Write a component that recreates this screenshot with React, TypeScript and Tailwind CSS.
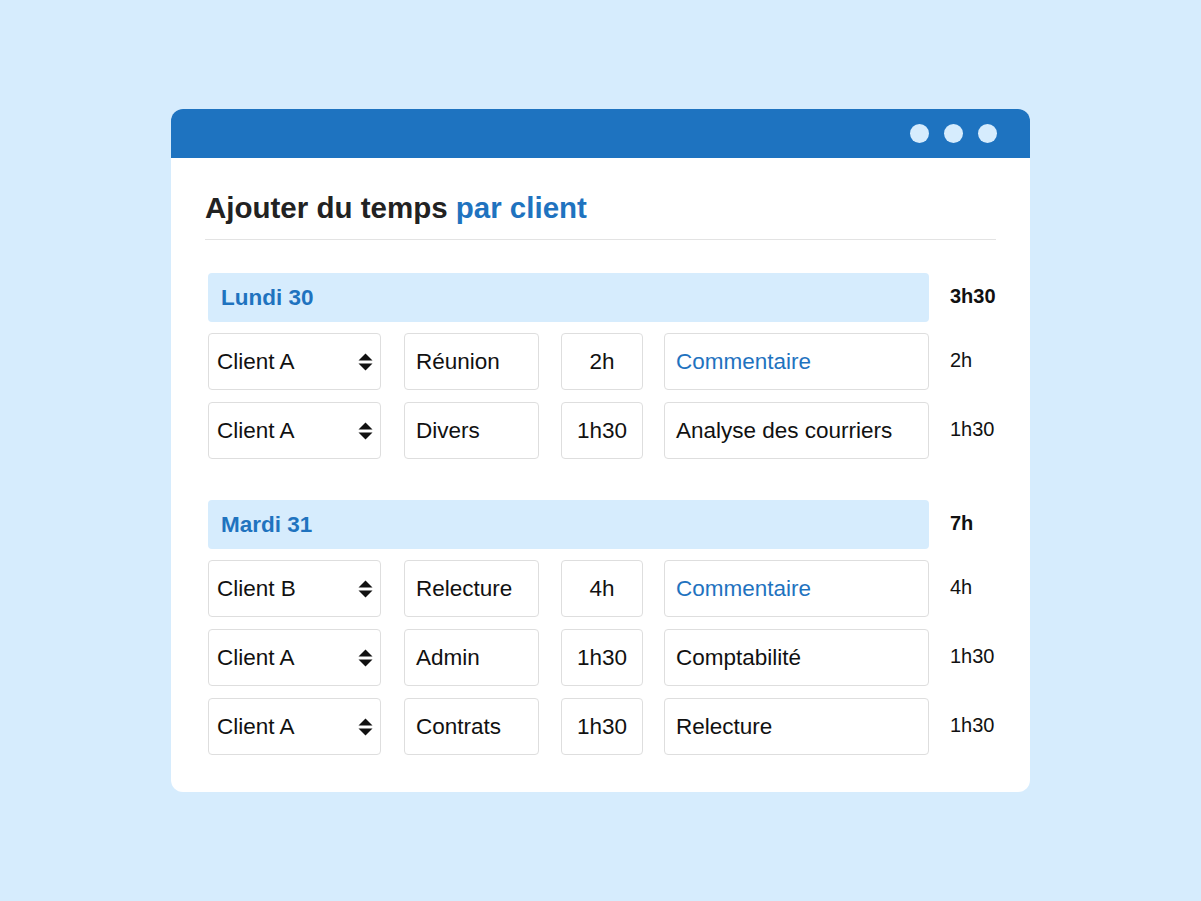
import React from 'react';

type Entry = {
  client: string;
  activity: string;
  duration: string;
  comment: string;
  placeholder?: boolean;
};

type Day = {
  label: string;
  total: string;
  entries: Entry[];
};

const DAYS: Day[] = [
  {
    label: 'Lundi 30',
    total: '3h30',
    entries: [
      { client: 'Client A', activity: 'Réunion', duration: '2h', comment: 'Commentaire', placeholder: true },
      { client: 'Client A', activity: 'Divers', duration: '1h30', comment: 'Analyse des courriers' },
    ],
  },
  {
    label: 'Mardi 31',
    total: '7h',
    entries: [
      { client: 'Client B', activity: 'Relecture', duration: '4h', comment: 'Commentaire', placeholder: true },
      { client: 'Client A', activity: 'Admin', duration: '1h30', comment: 'Comptabilité' },
      { client: 'Client A', activity: 'Contrats', duration: '1h30', comment: 'Relecture' },
    ],
  },
];

const SortArrows: React.FC = () => (
  <svg width="15" height="20" viewBox="0 0 15 20" className="shrink-0">
    <path d="M7.5 1.5 L14.5 8.5 H0.5 Z" fill="#111" />
    <path d="M7.5 18.5 L14.5 11.5 H0.5 Z" fill="#111" />
  </svg>
);

const box = 'h-[57px] bg-white border border-[#dedede] rounded-[4px] flex items-center';

const EntryRow: React.FC<{ entry: Entry }> = ({ entry }) => (
  <div className="flex items-center">
    <div className={`${box} w-[173px] pl-[8px] pr-[7px] justify-between`}>
      <span>{entry.client}</span>
      <SortArrows />
    </div>
    <div className={`${box} w-[135px] ml-[23px] pl-[11px]`}>{entry.activity}</div>
    <div className={`${box} w-[82px] ml-[22px] justify-center`}>{entry.duration}</div>
    <div
      className={`${box} w-[265px] ml-[21px] pl-[11px] ${entry.placeholder ? 'text-[#1f73bf]' : ''}`}
    >
      {entry.comment}
    </div>
    <div className="ml-[21px] pb-[4px] text-[20px] text-[#111]">{entry.duration}</div>
  </div>
);

const DaySection: React.FC<{ day: Day }> = ({ day }) => (
  <div className="flex flex-col gap-[12px]">
    <div className="flex items-center">
      <div className="w-[721px] h-[49px] bg-[#d6ecfd] rounded-[4px] flex items-center pl-[13px] text-[22.5px] font-bold text-[#1f73bf]">
        {day.label}
      </div>
      <div className="ml-[21px] pb-[3px] text-[20px] font-bold text-[#111]">{day.total}</div>
    </div>
    <div className="flex flex-col gap-[12px] -mt-[1px]">
      {day.entries.map((e, i) => (
        <EntryRow key={i} entry={e} />
      ))}
    </div>
  </div>
);

export default function App() {
  return (
    <div
      className="w-full h-screen bg-[#d6ecfd] flex items-center justify-center"
      style={{ fontFamily: '"Liberation Sans", Arial, Helvetica, sans-serif' }}
    >
      <div className="w-[859px] h-[683px] bg-white rounded-[12px] overflow-hidden flex flex-col">
        <div className="h-[49px] bg-[#1e73c0] flex items-center justify-end gap-[15px] pr-[33px]">
          <span className="w-[19px] h-[19px] rounded-full bg-[#d6ecfd]" />
          <span className="w-[19px] h-[19px] rounded-full bg-[#d6ecfd]" />
          <span className="w-[19px] h-[19px] rounded-full bg-[#d6ecfd]" />
        </div>
        <div className="px-[34px] pt-[34px]">
          <h1 className="text-[29.5px] leading-[32px] font-bold text-[#222]">
            Ajouter du temps <span className="text-[#1f73bf]">par client</span>
          </h1>
          <div className="mt-[15px] h-px bg-[#e3e3e3]" />
          <div className="ml-[3px] mt-[33px] flex flex-col gap-[41px] text-[22.5px] text-[#111]">
            {DAYS.map((d) => (
              <DaySection key={d.label} day={d} />
            ))}
          </div>
        </div>
      </div>
    </div>
  );
}
